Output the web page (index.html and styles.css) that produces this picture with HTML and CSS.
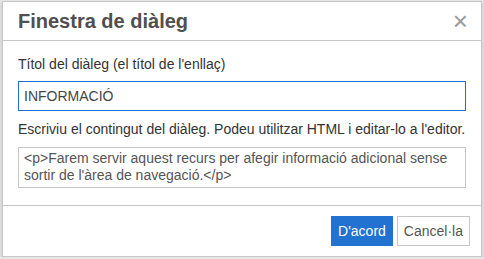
FILE: index.html
```html
<!DOCTYPE html>
<html lang="ca">
<head>
    <meta charset="UTF-8">
    <title>Finestra de diàleg</title>
    <link rel="stylesheet" href="styles.css">
</head>
<body>
    <div class="dialog">
        <div class="dialog-header">
            <h1>Finestra de diàleg</h1>
            <span class="close-button">&times;</span>
        </div>
        <div class="dialog-body">
            <label class="field-label" for="title">Títol del diàleg (el títol de l'enllaç)</label>
            <input id="title" class="text-input" type="text" value="INFORMACIÓ">
            <p class="field-label">Escriviu el contingut del diàleg. Podeu utilitzar HTML i editar-lo a l'editor.</p>
            <div class="text-area">&lt;p&gt;Farem servir aquest recurs per afegir informació adicional sense sortir de l'àrea de navegació.&lt;/p&gt;</div>
        </div>
        <div class="dialog-footer">
            <button class="btn btn-primary">D'acord</button>
            <button class="btn">Cancel·la</button>
        </div>
    </div>
</body>
</html>
```

FILE: styles.css
```css
body {
    font-family: "Liberation Sans", Arial, sans-serif;
    margin: 0;
    padding: 1px 2px 0 2px;
    background-color: #e6e6e6;
    color: #333;
}

.dialog {
    background: white;
    border: 1px solid #c8c8c8;
    width: 478px;
    height: 254px;
    display: flex;
    flex-direction: column;
    box-shadow: 0 2px 3px rgba(0,0,0,0.2);
}

.dialog-header {
    display: flex;
    align-items: center;
    justify-content: space-between;
    height: 38px;
    padding: 0 13px 0 15px;
    border-bottom: 1px solid #c8c8c8;
}

h1 {
    margin: 0;
    font-size: 20px;
    font-weight: bold;
    color: #4f4f4f;
}

.close-button {
    font-size: 26px;
    color: #9a9a9a;
    line-height: 1;
}

.dialog-body {
    flex: 1;
    padding: 14px 15px 0 15px;
    border-bottom: 1px solid #c8c8c8;
}

.field-label {
    display: block;
    margin: 0;
    font-size: 14px;
    line-height: 18px;
    color: #333;
}

.text-input {
    display: block;
    box-sizing: border-box;
    width: 448px;
    height: 30px;
    margin: 8px 0 9px 0;
    padding: 0 5px;
    border: 1px solid #1e6fd0;
    font-family: inherit;
    font-size: 14px;
    color: #444;
    outline: none;
}

.text-area {
    box-sizing: border-box;
    width: 448px;
    height: 41px;
    margin-top: 9px;
    padding: 2px 5px;
    border: 1px solid #c6c6c6;
    font-size: 14px;
    line-height: 17px;
    color: #555;
}

.dialog-footer {
    display: flex;
    justify-content: flex-end;
    gap: 4px;
    padding: 10px 11px 0 0;
    height: 40px;
}

.btn {
    height: 30px;
    padding: 0 6px;
    border: 1px solid #c6c6c6;
    background: white;
    font-family: inherit;
    font-size: 14px;
    color: #555;
}

.btn-primary {
    background-color: #2172d1;
    border-color: #2172d1;
    color: white;
}
```
